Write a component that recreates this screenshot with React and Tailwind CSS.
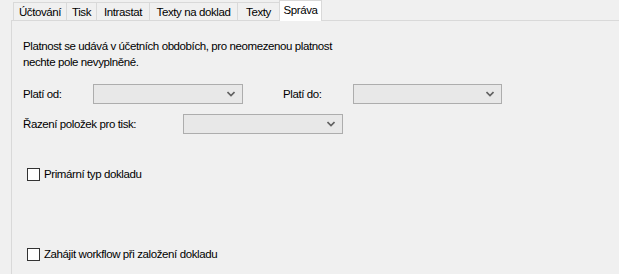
import React from "react";

const tabs = [
  { label: "Účtování", w: "w-[54px]" },
  { label: "Tisk", w: "w-[31px]" },
  { label: "Intrastat", w: "w-[54px]" },
  { label: "Texty na doklad", w: "w-[89px]" },
  { label: "Texty", w: "w-[43px]" },
];

const Chevron = () => (
  <svg width="8" height="6" viewBox="0 0 8 6" className="text-[#606060]">
    <path d="M0.5 1 L4 4.5 L7.5 1" fill="none" stroke="currentColor" strokeWidth="1.6" />
  </svg>
);

const Select = ({ w }) => (
  <div
    className={`${w} h-[20px] border border-[#adadad] bg-[#e8e8e8] flex items-center justify-end pr-[7px]`}
  >
    <Chevron />
  </div>
);

const Checkbox = ({ label }) => (
  <div className="flex items-center h-[16px] pl-[4px]">
    <div className="w-[13px] h-[13px] border border-[#333333] bg-white" />
    <span className="ml-[4px]">{label}</span>
  </div>
);

export default function App() {
  return (
    <div
      className="w-[619px] h-[274px] bg-[#f0f0f0] overflow-hidden pl-[11px] text-[11.5px] tracking-[-0.4px] text-black leading-[16px]"
      style={{ fontFamily: '"Liberation Sans", Arial, sans-serif' }}
    >
      <div className="flex items-end h-[20px] pl-[2px]">
        {tabs.map((t) => (
          <div
            key={t.label}
            className={`${t.w} h-[18px] -mr-px border border-b-0 border-[#d9d9d9] bg-[#f0f0f0] flex items-center justify-center`}
          >
            {t.label}
          </div>
        ))}
        <div className="relative z-10 w-[43px] h-[21px] -mb-px border border-b-0 border-[#d9d9d9] bg-white flex items-start justify-center pt-[1px]">
          Správa
        </div>
      </div>
      <div className="h-[254px] border-t border-l border-[#d9d9d9] pl-[11px] pt-[17px]">
        <p>
          Platnost se udává v účetních obdobích, pro neomezenou platnost
          <br />
          nechte pole nevyplněné.
        </p>
        <div className="flex items-center mt-[14px]">
          <span className="w-[70px]">Platí od:</span>
          <Select w="w-[150px]" />
          <span className="w-[70px] ml-[40px]">Platí do:</span>
          <Select w="w-[149px]" />
        </div>
        <div className="flex items-center mt-[10px]">
          <span className="w-[160px]">Řazení položek pro tisk:</span>
          <Select w="w-[160px]" />
        </div>
        <div className="mt-[32px]">
          <Checkbox label="Primární typ dokladu" />
        </div>
        <div className="mt-[64px]">
          <Checkbox label="Zahájit workflow při založení dokladu" />
        </div>
      </div>
    </div>
  );
}
